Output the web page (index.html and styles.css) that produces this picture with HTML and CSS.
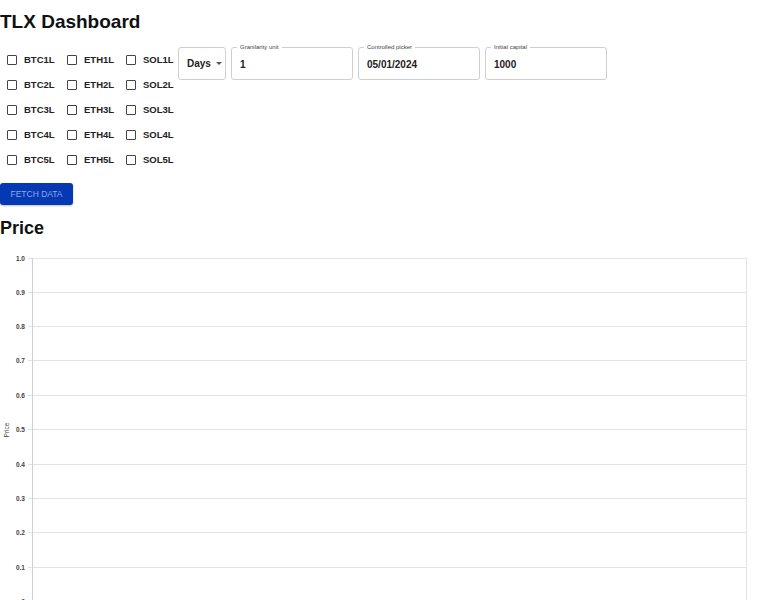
FILE: index.html
```html
<!DOCTYPE html>
<html>
<head>
<meta charset="utf-8">
<link rel="stylesheet" href="styles.css">
</head>
<body>
<h1 class="title">TLX Dashboard</h1>
<div class="controls">
  <div class="assets">
    <label class="cb"><span class="box"></span>BTC1L</label>
    <label class="cb"><span class="box"></span>ETH1L</label>
    <label class="cb"><span class="box"></span>SOL1L</label>
    <label class="cb"><span class="box"></span>BTC2L</label>
    <label class="cb"><span class="box"></span>ETH2L</label>
    <label class="cb"><span class="box"></span>SOL2L</label>
    <label class="cb"><span class="box"></span>BTC3L</label>
    <label class="cb"><span class="box"></span>ETH3L</label>
    <label class="cb"><span class="box"></span>SOL3L</label>
    <label class="cb"><span class="box"></span>BTC4L</label>
    <label class="cb"><span class="box"></span>ETH4L</label>
    <label class="cb"><span class="box"></span>SOL4L</label>
    <label class="cb"><span class="box"></span>BTC5L</label>
    <label class="cb"><span class="box"></span>ETH5L</label>
    <label class="cb"><span class="box"></span>SOL5L</label>
  </div>
  <div class="select">Days <span class="caret"></span></div>
  <div class="field"><span class="flabel">Granilarity unit</span><span class="fval">1</span></div>
  <div class="field"><span class="flabel">Controlled picker</span><span class="fval">05/01/2024</span></div>
  <div class="field"><span class="flabel">Initial capital</span><span class="fval">1000</span></div>
</div>
<button class="fetch">FETCH DATA</button>
<h2 class="subtitle">Price</h2>
<div class="chart">
<svg width="760" height="360" viewBox="0 0 760 360" xmlns="http://www.w3.org/2000/svg">
  <g stroke="#e3e3e3" stroke-width="1">
    <line x1="28" y1="8.5" x2="746" y2="8.5"/>
    <line x1="28" y1="42.5" x2="746" y2="42.5"/>
    <line x1="28" y1="76.5" x2="746" y2="76.5"/>
    <line x1="28" y1="110.5" x2="746" y2="110.5"/>
    <line x1="28" y1="145.5" x2="746" y2="145.5"/>
    <line x1="28" y1="179.5" x2="746" y2="179.5"/>
    <line x1="28" y1="214.5" x2="746" y2="214.5"/>
    <line x1="28" y1="248.5" x2="746" y2="248.5"/>
    <line x1="28" y1="282.5" x2="746" y2="282.5"/>
    <line x1="28" y1="317.5" x2="746" y2="317.5"/>
    <line x1="28" y1="351.5" x2="746" y2="351.5"/>
    <line x1="746.5" y1="8" x2="746.5" y2="352"/>
  </g>
  <line x1="32.5" y1="8" x2="32.5" y2="352" stroke="#d0d0d0" stroke-width="1"/>
  <g font-family="Liberation Sans, Arial, sans-serif" font-size="6.5" font-weight="bold" fill="#444" text-anchor="end">
    <text x="25" y="10.5">1.0</text>
    <text x="25" y="44.5">0.9</text>
    <text x="25" y="78.5">0.8</text>
    <text x="25" y="112.5">0.7</text>
    <text x="25" y="147.5">0.6</text>
    <text x="25" y="181.5">0.5</text>
    <text x="25" y="216.5">0.4</text>
    <text x="25" y="250.5">0.3</text>
    <text x="25" y="284.5">0.2</text>
    <text x="25" y="319.5">0.1</text>
    <text x="25" y="353.5">0</text>
  </g>
  <text x="9" y="180" font-family="Liberation Sans, Arial, sans-serif" font-size="6.5" fill="#444" text-anchor="middle" transform="rotate(-90 9 180)">Price</text>
</svg>
</div>
</body>
</html>
```
FILE: styles.css
```css
html, body {
  margin: 0;
  padding: 0;
  background: #fff;
  font-family: "Liberation Sans", Arial, sans-serif;
  color: #111;
}
.title {
  margin: 0;
  padding-top: 10px;
  height: 37px;
  font-size: 19px;
  font-weight: bold;
  line-height: 24px;
}
.controls {
  display: flex;
  align-items: flex-start;
}
.assets {
  display: grid;
  grid-template-columns: 60px 59px 52px;
  grid-auto-rows: 25px;
  padding-left: 7px;
}
.cb {
  display: flex;
  align-items: center;
  gap: 7px;
  font-size: 9.5px;
  font-weight: bold;
  color: #222;
}
.box {
  width: 8px;
  height: 8px;
  border: 1.6px solid #444;
  border-radius: 1px;
}
.select {
  box-sizing: border-box;
  width: 48px;
  height: 33px;
  border: 1px solid #cfcfcf;
  border-radius: 3px;
  display: flex;
  align-items: center;
  padding-left: 8px;
  font-size: 10px;
  font-weight: bold;
  color: #222;
  gap: 5px;
}
.caret {
  width: 0;
  height: 0;
  border-left: 3px solid transparent;
  border-right: 3px solid transparent;
  border-top: 3px solid #555;
}
.field {
  position: relative;
  box-sizing: border-box;
  width: 122px;
  height: 33px;
  margin-left: 5px;
  border: 1px solid #cfcfcf;
  border-radius: 3px;
  display: flex;
  align-items: center;
  padding-left: 8px;
}
.field:first-of-type { margin-left: 6px; }
.flabel {
  position: absolute;
  top: -5px;
  left: 5px;
  padding: 0 3px;
  background: #fff;
  font-size: 6px;
  line-height: 8px;
  color: #444;
}
.fval {
  font-size: 10px;
  font-weight: bold;
  color: #222;
  margin-top: 2px;
}
.fetch {
  display: block;
  margin: 11px 0 0 0;
  width: 73px;
  height: 22px;
  border: none;
  border-radius: 3px;
  background: #0538b3;
  color: #8fa9e8;
  font-family: "Liberation Sans", Arial, sans-serif;
  font-size: 8.5px;
  padding: 0;
  box-shadow: 0 1px 2px rgba(0,0,0,0.25);
}
.subtitle {
  margin: 0;
  padding-top: 12px;
  height: 33px;
  font-size: 18px;
  font-weight: bold;
  line-height: 22px;
}
.chart svg {
  display: block;
}
```
